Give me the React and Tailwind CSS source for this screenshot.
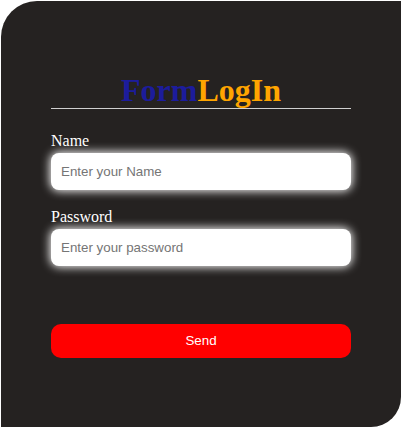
import React, { useState } from "react";

const App = () => {
  const [name, setName] = useState("");
  const [password, setPassword] = useState("");

  return (
    <div className="bg-white w-[402px] h-[428px] pt-[1px] pl-[1px]">
      <div className="w-[400px] h-[426px] bg-[#252221] rounded-tl-[36px] rounded-br-[30px] px-[50px] pt-[71px]">
        <h1 className="text-center text-[32px] leading-[36px] font-bold font-['Liberation_Serif',serif]">
          <span className="text-[#1c1c9c]">Form</span>
          <span className="text-[#ffa500]">LogIn</span>
        </h1>
        <div className="h-px bg-[#d0d0d0]" />

        <form className="flex flex-col" onSubmit={(e) => e.preventDefault()}>
          <label className="mt-[23px] text-white text-[16px] leading-[18px] font-['Liberation_Serif',serif]">
            Name
          </label>
          <input
            type="text"
            placeholder="Enter your Name"
            value={name}
            onChange={(e) => setName(e.target.value)}
            className="mt-[3px] h-[37px] w-full rounded-lg bg-white px-[10px] text-[13.33px] text-black placeholder:text-[#757575] font-['Liberation_Sans',sans-serif] shadow-[0_0_10px_1px_#fff] outline-none"
          />

          <label className="mt-[18px] text-white text-[16px] leading-[18px] font-['Liberation_Serif',serif]">
            Password
          </label>
          <input
            type="password"
            placeholder="Enter your password"
            value={password}
            onChange={(e) => setPassword(e.target.value)}
            className="mt-[3px] h-[37px] w-full rounded-lg bg-white px-[10px] text-[13.33px] text-black placeholder:text-[#757575] font-['Liberation_Sans',sans-serif] shadow-[0_0_10px_1px_#fff] outline-none"
          />

          <button
            type="submit"
            className="mt-[58px] h-[34px] w-full rounded-[10px] bg-[#ff0000] text-white text-[13.33px] font-['Liberation_Sans',sans-serif]"
          >
            Send
          </button>
        </form>
      </div>
    </div>
  );
};

export default App;
